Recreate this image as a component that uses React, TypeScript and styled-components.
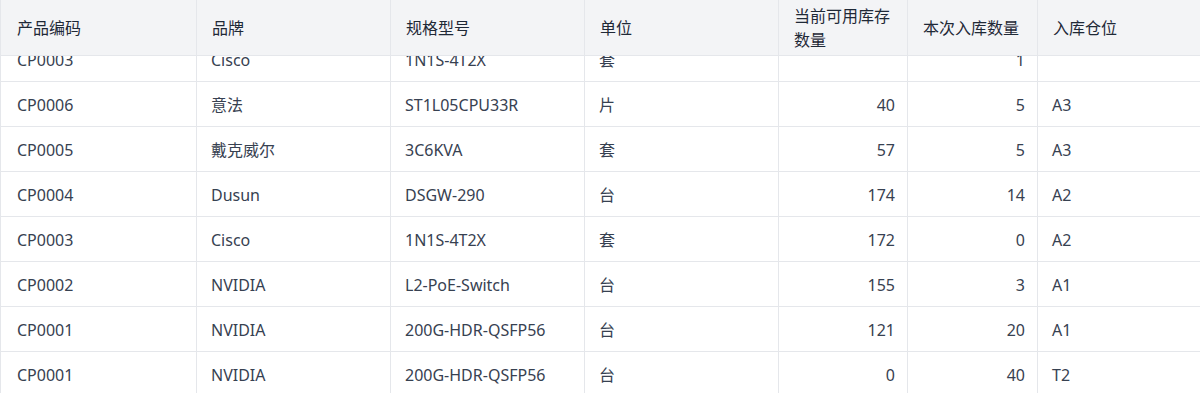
import React, { useLayoutEffect, useRef } from "react";
import styled, { createGlobalStyle } from "styled-components";

const Global = createGlobalStyle`
  html, body { margin: 0; padding: 0; background: #fff; }
  body { font-family: "Noto Sans", "Noto Sans CJK SC", sans-serif; }
`;

const Scroller = styled.div`
  height: 393px;
  width: 1200px;
  overflow-y: auto;
  overflow-x: hidden;
  scrollbar-width: none;
  &::-webkit-scrollbar { display: none; }
`;

const Table = styled.table`
  width: 1200px;
  table-layout: fixed;
  border-collapse: separate;
  border-spacing: 0;
  font-size: 16px;
  color: #374151;
  border-left: 1px solid #e5e7eb;
`;

const HeadCell = styled.th`
  position: sticky;
  top: 0;
  z-index: 1;
  background: #f3f4f6;
  color: #1f2937;
  font-weight: 400;
  text-align: left;
  line-height: 24px;
  padding: 4px 12px 3px 15px;
  height: 48px;
  box-sizing: content-box;
  vertical-align: middle;
  border-right: 1px solid #e5e7eb;
  border-bottom: 1px solid #e5e7eb;
  &:first-child { padding-left: 16px; }
  &:last-child { border-right: none; }
`;

const HeadText = styled.div`
  line-height: 24px;
`;

const Cell = styled.td<{ $right?: boolean }>`
  text-align: ${(p) => (p.$right ? "right" : "left")};
  line-height: 24px;
  padding: 11px 12px 9px 14px;
  border-right: 1px solid #e5e7eb;
  border-bottom: 1px solid #e5e7eb;
  vertical-align: middle;
  white-space: nowrap;
  &:first-child { padding-left: 16px; }
  &:last-child { border-right: none; }
`;

const widths = [196, 194, 194, 194, 129, 130, 162];

const headers = ["产品编码", "品牌", "规格型号", "单位", "当前可用库存数量", "本次入库数量", "入库仓位"];

type Row = [string, string, string, string, string, string, string];

const rows: Row[] = [
  ["CP0003", "Cisco", "1N1S-4T2X", "套", "", "1", ""],
  ["CP0006", "意法", "ST1L05CPU33R", "片", "40", "5", "A3"],
  ["CP0005", "戴克威尔", "3C6KVA", "套", "57", "5", "A3"],
  ["CP0004", "Dusun", "DSGW-290", "台", "174", "14", "A2"],
  ["CP0003", "Cisco", "1N1S-4T2X", "套", "172", "0", "A2"],
  ["CP0002", "NVIDIA", "L2-PoE-Switch", "台", "155", "3", "A1"],
  ["CP0001", "NVIDIA", "200G-HDR-QSFP56", "台", "121", "20", "A1"],
  ["CP0001", "NVIDIA", "200G-HDR-QSFP56", "台", "0", "40", "T2"],
];

export default function App() {
  const ref = useRef<HTMLDivElement>(null);
  useLayoutEffect(() => {
    if (ref.current) ref.current.scrollTop = 19;
  }, []);
  return (
    <>
      <Global />
      <Scroller ref={ref}>
        <Table>
          <colgroup>
            {widths.map((w, i) => (
              <col key={i} style={{ width: w }} />
            ))}
          </colgroup>
          <thead>
            <tr>
              {headers.map((h) => (
                <HeadCell key={h}>
                  <HeadText>{h}</HeadText>
                </HeadCell>
              ))}
            </tr>
          </thead>
          <tbody>
            {rows.map((r, i) => (
              <tr key={i}>
                {r.map((c, j) => (
                  <Cell key={j} $right={j === 4 || j === 5}>
                    {c}
                  </Cell>
                ))}
              </tr>
            ))}
          </tbody>
        </Table>
      </Scroller>
    </>
  );
}
